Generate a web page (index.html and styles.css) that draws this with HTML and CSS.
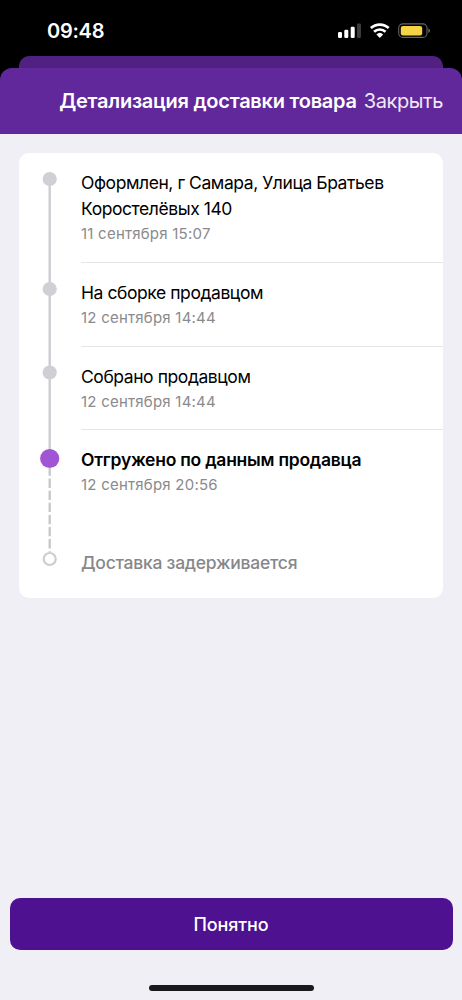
FILE: index.html
```html
<!DOCTYPE html>
<html lang="ru">
<head>
<meta charset="utf-8">
<meta name="viewport" content="width=device-width, initial-scale=1">
<title>Детализация доставки товара</title>
<link rel="stylesheet" href="styles.css">
</head>
<body>
<div class="screen">
  <div class="status">
    <span class="clock">09:48</span>
    <svg class="indicators" width="96" height="18" viewBox="0 0 96 18">
      <g fill="#fff">
        <rect x="1" y="10" width="4" height="6" rx="1.2"/>
        <rect x="7.3" y="7.7" width="4" height="8.3" rx="1.2"/>
        <rect x="13.7" y="4.7" width="4" height="11.3" rx="1.2"/>
        <rect x="20" y="1.5" width="4" height="14.5" rx="1.2" fill="#3c3c3e"/>
      </g>
      <g fill="none" stroke="#fff" stroke-width="2.7">
        <path d="M33.9 6.1a13.1 13.1 0 0 1 17.8 0"/>
        <path d="M37.1 9.8a8.2 8.2 0 0 1 11.4 0"/>
      </g>
      <path d="M39.4 12.4a5 5 0 0 1 6.8 0L42.8 16Z" fill="#fff"/>
      <rect x="61.7" y="1.9" width="28.3" height="13.5" rx="4.2" fill="none" stroke="#646466" stroke-width="1.1"/>
      <rect x="63.8" y="3.9" width="21.4" height="9.6" rx="2.2" fill="#f5d344"/>
      <path d="M91.4 6.3c2 .8 2 3.9 0 4.7Z" fill="#737375"/>
    </svg>
  </div>
  <div class="back-sheet"></div>
  <header class="header">
    <h1 class="title">Детализация доставки товара</h1>
    <span class="close">Закрыть</span>
  </header>
  <main class="content">
    <section class="card">
      <svg class="rail" width="62" height="445" viewBox="0 0 62 445">
        <path d="M30.7 26V306" stroke="#cdccd2" stroke-width="2.4"/>
        <path d="M30.7 315V399" stroke="#c9c9cd" stroke-width="2.4" stroke-dasharray="9.3 2.8" stroke-dashoffset="1.5"/>
        <circle cx="30.7" cy="26" r="7.1" fill="#d0cfd5"/>
        <circle cx="30.7" cy="136" r="7.1" fill="#d0cfd5"/>
        <circle cx="30.7" cy="219.5" r="7.1" fill="#d0cfd5"/>
        <circle cx="30.7" cy="305.5" r="9.6" fill="#a155d6"/>
        <circle cx="30.7" cy="406" r="6" fill="#fff" stroke="#cdccd1" stroke-width="2.2"/>
      </svg>
      <div class="steps">
        <div class="step"><div class="name">Оформлен, г Самара, Улица Братьев<br>Коростелёвых 140</div><div class="date">11 сентября 15:07</div></div>
        <div class="step"><div class="name">На сборке продавцом</div><div class="date">12 сентября 14:44</div></div>
        <div class="step short"><div class="name">Собрано продавцом</div><div class="date">12 сентября 14:44</div></div>
        <div class="step current"><div class="name strong">Отгружено по данным продавца</div><div class="date">12 сентября 20:56</div></div>
        <div class="step last"><div class="name pending">Доставка задерживается</div></div>
      </div>
    </section>
  </main>
  <footer class="footer">
    <button class="confirm">Понятно</button>
    <div class="home"></div>
  </footer>
</div>
</body>
</html>
```
FILE: styles.css
```css
* { box-sizing: border-box; }
body { margin: 0; background: #000; font-family: Inter, "Noto Sans", sans-serif; }
.screen { display: flex; flex-direction: column; height: 1000px; background: linear-gradient(#000 100px, #f0eff6 100px); }
.status { display: flex; justify-content: space-between; align-items: flex-start; height: 56px; padding: 19px 29px 0 47px; color: #fff; }
.clock { font-size: 20px; line-height: 24px; font-weight: 600; letter-spacing: -0.25px; }
.indicators { margin-top: 3px; }
.back-sheet { height: 12px; margin: 0 19px; background: #512181; border-radius: 10px 10px 0 0; }
.header { display: flex; align-items: center; justify-content: flex-end; gap: 7px; height: 66px; padding-right: 19px; background: #60289b; border-radius: 12px 12px 0 0; color: #fff; white-space: nowrap; }
.title { margin: 0; font-size: 20px; line-height: 24px; font-weight: 600; letter-spacing: -0.25px; }
.close { font-size: 20px; line-height: 24px; letter-spacing: -0.42px; color: #f0e9f6; }
.content { flex: 1; padding: 19px 19px 0; background: #f0eff6; }
.card { display: flex; height: 445px; border-radius: 10px; background: #fff; }
.rail { flex: none; }
.steps { flex: 1; white-space: nowrap; }
.step { padding: 17px 0 16px; border-bottom: 1px solid #e5e5e7; }
.short { padding-bottom: 15px; }
.current { height: 103px; border: 0; }
.last { border: 0; }
.name { font-size: 17.5px; line-height: 26px; letter-spacing: -0.43px; color: #000; }
.strong { font-weight: 600; letter-spacing: -0.25px; }
.pending { font-weight: 500; letter-spacing: -0.25px; color: #87878a; }
.date { font-size: 15px; line-height: 24px; letter-spacing: 0.23px; color: #8a8a8c; }
.footer { display: flex; flex-direction: column; align-items: center; height: 102px; padding: 0 9.5px; background: #f0eff6; }
.confirm { width: 100%; height: 52px; border: 0; border-radius: 10px; background: #4e118f; color: #fff; font-family: inherit; font-size: 18px; font-weight: 500; letter-spacing: -0.1px; }
.home { width: 165px; height: 6px; margin-top: 35px; border-radius: 3px; background: #1a1a1c; }
```
